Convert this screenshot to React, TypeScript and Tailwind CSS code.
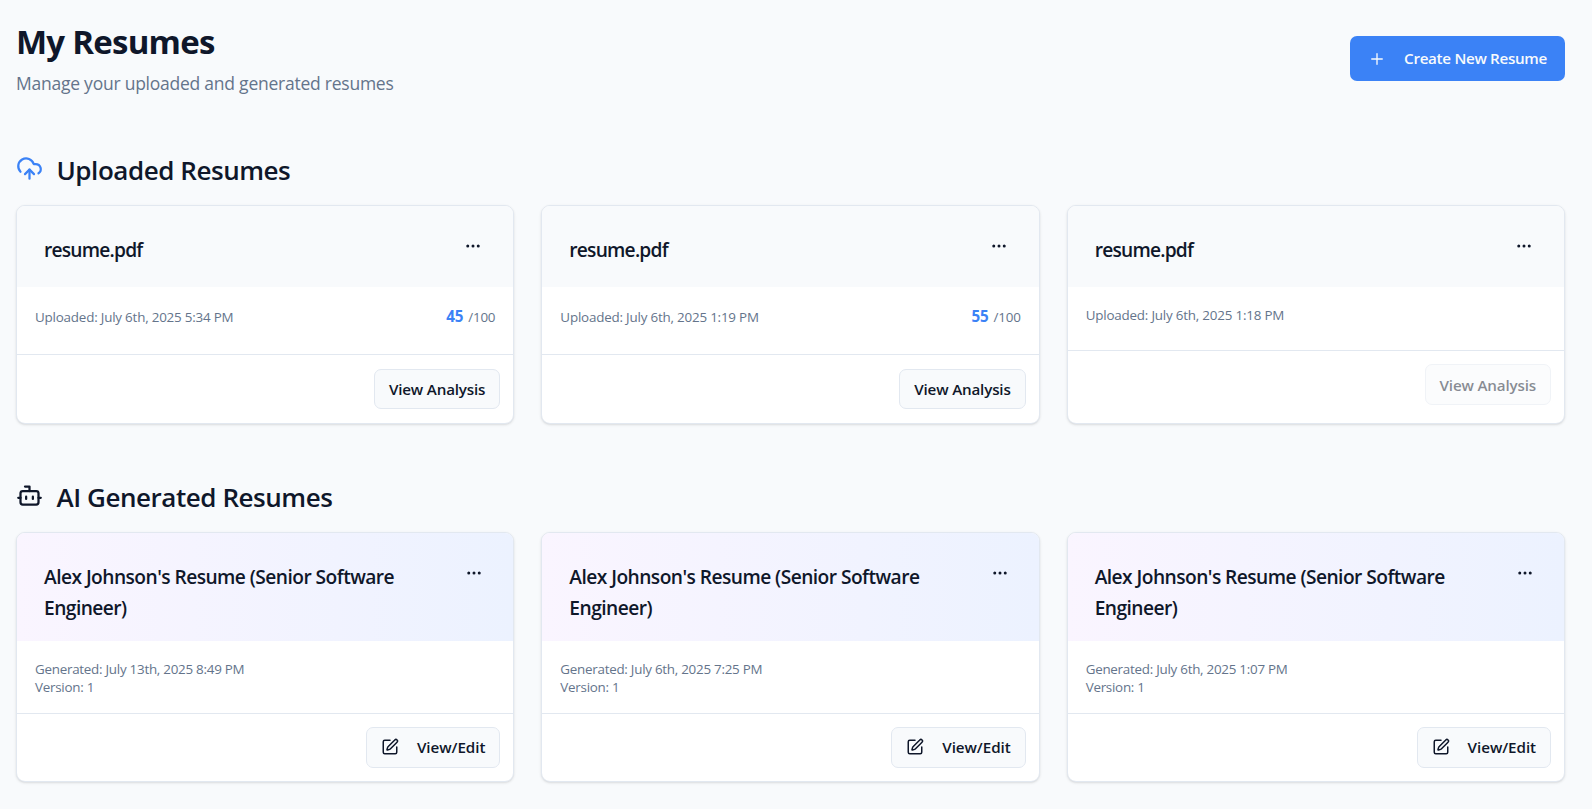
import React from "react";
import { Bot, CloudUpload, Ellipsis, Plus, SquarePen } from "lucide-react";

type Uploaded = { name: string; date: string; score?: number };
type Generated = { name: string; date: string; version: number };

const uploaded: Uploaded[] = [
  { name: "resume.pdf", date: "July 6th, 2025 5:34 PM", score: 45 },
  { name: "resume.pdf", date: "July 6th, 2025 1:19 PM", score: 55 },
  { name: "resume.pdf", date: "July 6th, 2025 1:18 PM" },
];

const generated: Generated[] = [
  { name: "Alex Johnson's Resume (Senior Software Engineer)", date: "July 13th, 2025 8:49 PM", version: 1 },
  { name: "Alex Johnson's Resume (Senior Software Engineer)", date: "July 6th, 2025 7:25 PM", version: 1 },
  { name: "Alex Johnson's Resume (Senior Software Engineer)", date: "July 6th, 2025 1:07 PM", version: 1 },
];

const cardClass = "flex flex-col overflow-hidden rounded-[9px] border border-[#e2e8f0] bg-white shadow-sm";
const buttonClass =
  "flex items-center rounded-[7px] border border-[#e2e8f0] bg-[#f8fafc] px-[14px] text-[15.2px] leading-[22px] font-semibold";

function UploadedCard({ item }: { item: Uploaded }) {
  const scored = item.score !== undefined;
  return (
    <article className={`${cardClass} h-[219px]`}>
      <header className="flex h-[81px] shrink-0 items-start justify-between bg-[#f8fafc] pt-[28px] pr-[31px] pl-[27px]">
        <h3 className="text-[19.2px] leading-[31px] font-semibold tracking-[-0.78px]">{item.name}</h3>
        <button className="mt-[3px]" aria-label="More">
          <Ellipsis size={18} />
        </button>
      </header>
      <div
        className={`flex shrink-0 items-start justify-between px-[18px] text-[13.4px] leading-[18px] tracking-[-0.2px] text-[#64748b] ${scored ? "h-[67px] pt-[21px]" : "h-[63px] pt-[19px]"}`}
      >
        <p>Uploaded: {item.date}</p>
        {scored && (
          <p className="-mt-px">
            <span className="mr-[5px] text-[15.2px] font-bold tracking-[-0.2px] text-[#3b82f6]">{item.score}</span>
            /100
          </p>
        )}
      </div>
      <footer
        className={`flex grow items-start justify-end border-t border-[#e2e8f0] pr-[13px] ${scored ? "pt-[14px]" : "pt-[13px]"}`}
      >
        <button
          className={`${buttonClass} tracking-[-0.17px] ${scored ? "h-[40px]" : "h-[41px] opacity-50"}`}
          disabled={!scored}
        >
          View Analysis
        </button>
      </footer>
    </article>
  );
}

function GeneratedCard({ item }: { item: Generated }) {
  return (
    <article className={`${cardClass} h-[250px]`}>
      <header className="flex h-[108px] shrink-0 items-start justify-between bg-linear-to-r from-[#faf5ff] to-[#ecf2ff] pt-[28px] pr-[30px] pl-[27px]">
        <h3 className="w-[380px] text-[19.2px] leading-[31px] font-semibold tracking-[-0.55px]">{item.name}</h3>
        <button className="mt-[3px]" aria-label="More">
          <Ellipsis size={18} />
        </button>
      </header>
      <div className="h-[72px] shrink-0 px-[18px] pt-[19px] text-[13.4px] leading-[18px] tracking-[-0.26px] text-[#64748b]">
        <p>Generated: {item.date}</p>
        <p>Version: {item.version}</p>
      </div>
      <footer className="flex grow items-start justify-end border-t border-[#e2e8f0] pt-[13px] pr-[13px]">
        <button className={`${buttonClass} h-[41px] gap-[18px] pb-px tracking-[-0.06px]`}>
          <SquarePen size={18} />
          View/Edit
        </button>
      </footer>
    </article>
  );
}

export default function App() {
  return (
    <main className="h-[809px] overflow-hidden bg-[#f8fafc] pt-[22px] pr-[27px] pl-[16px] font-['Open_Sans','Noto_Sans',sans-serif] text-[#0f172a]">
      <div className="flex h-[74px] items-start justify-between">
        <div>
          <h1 className="text-[33px] leading-[40px] font-bold tracking-[-0.75px]">My Resumes</h1>
          <p className="mt-[8px] text-[17.5px] leading-[27px] tracking-[-0.24px] text-[#64748b]">
            Manage your uploaded and generated resumes
          </p>
        </div>
        <button className="mt-[14px] flex h-[45px] items-center gap-[18px] rounded-[7px] bg-[#3b82f6] px-[18px] text-[15.2px] font-semibold tracking-[-0.31px] text-[#f8fafc]">
          <Plus size={18} strokeWidth={1.8} />
          Create New Resume
        </button>
      </div>

      <section className="mt-[54px]">
        <div className="flex h-[40px] items-start gap-[13.5px]">
          <CloudUpload size={27} className="mt-[5px] text-[#3b82f6]" />
          <h2 className="text-[26px] leading-[40px] font-semibold tracking-[-0.45px]">Uploaded Resumes</h2>
        </div>
        <div className="mt-[15px] grid grid-cols-3 gap-[27px]">
          {uploaded.map((item, i) => (
            <UploadedCard key={i} item={item} />
          ))}
        </div>
      </section>

      <section className="mt-[53px]">
        <div className="flex h-[40px] items-start gap-[13.5px]">
          <Bot size={27} className="mt-[5px]" />
          <h2 className="text-[26px] leading-[40px] font-semibold tracking-[-0.45px]">AI Generated Resumes</h2>
        </div>
        <div className="mt-[15px] grid grid-cols-3 gap-[27px]">
          {generated.map((item, i) => (
            <GeneratedCard key={i} item={item} />
          ))}
        </div>
      </section>
    </main>
  );
}
